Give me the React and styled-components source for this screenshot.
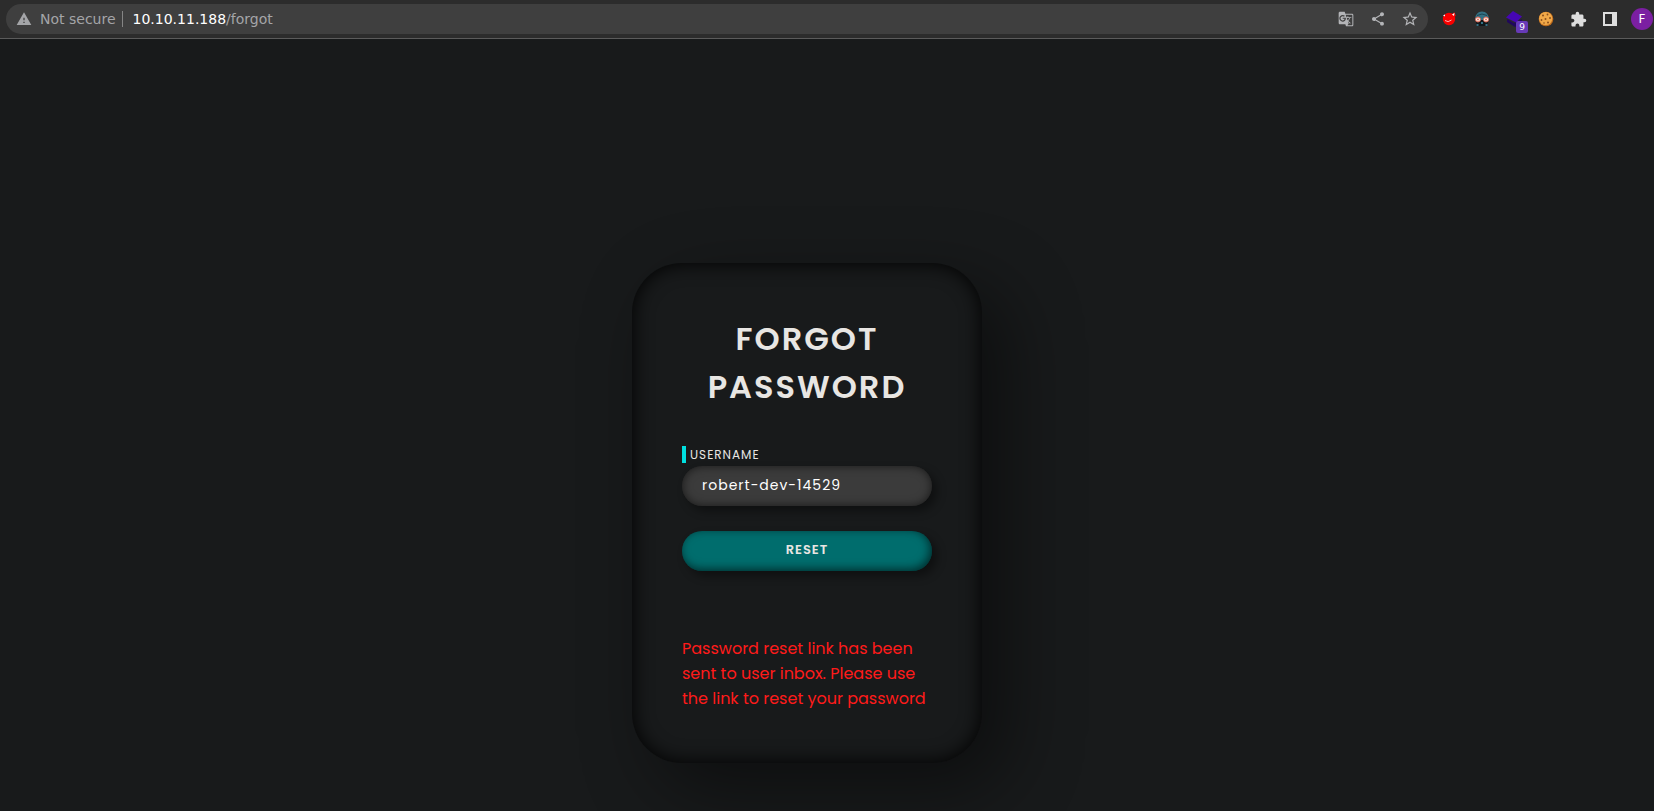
import React from "react";
import styled, { createGlobalStyle } from "styled-components";
import {
  MdWarning,
  MdGTranslate,
  MdShare,
  MdStarBorder,
  MdExtension,
} from "react-icons/md";

const GlobalStyle = createGlobalStyle`
  * { box-sizing: border-box; }
  html { background: #181a1b; }
  body { margin: 0; font-family: Poppins, Inter, sans-serif; }
  button, input { font: inherit; }
`;

const Page = styled.div`
  min-height: 100vh;
  display: flex;
  flex-direction: column;
  overflow: hidden;
`;

const Toolbar = styled.header`
  display: flex;
  align-items: center;
  gap: 6px;
  height: 39px;
  padding: 0 1px 0 6px;
  background: #2c2c2c;
  border-bottom: 1px solid #5b5b5b;
  font-family: "DejaVu Sans", sans-serif;
  font-size: 14px;
  color: #9aa0a6;
`;

const AddressBar = styled.div`
  flex: 1;
  display: flex;
  align-items: center;
  height: 30px;
  padding: 0 2px 0 10px;
  border-radius: 15px;
  background: #3f3f3f;
`;

const SiteInfo = styled.button`
  display: flex;
  align-items: center;
  gap: 8px;
  padding: 0;
  border: 0;
  background: none;
  color: #a4a5a8;
`;

const Divider = styled.span`
  width: 1px;
  height: 16px;
  margin: 0 10px 0 6px;
  background: #858585;
`;

const Url = styled.div`
  flex: 1;
  color: #a4a5a8;
`;

const Host = styled.span`
  color: #fff;
`;

const IconButton = styled.button`
  display: grid;
  place-items: center;
  position: relative;
  width: 32px;
  height: 30px;
  padding: 0;
  border: 0;
  background: none;
  color: ${(p) => (p.$bright ? "#dedede" : "#b4b5b8")};
`;

const Group = styled.div`
  display: flex;
  align-items: center;
`;

const Badge = styled.span`
  position: absolute;
  right: 2px;
  bottom: 1px;
  width: 12px;
  height: 12px;
  border-radius: 2px;
  background: #673ab7;
  color: #fff;
  font-size: 9px;
  line-height: 12px;
  text-align: center;
`;

const Avatar = styled.button`
  width: 22px;
  height: 22px;
  margin-left: 5px;
  padding: 0;
  border: 0;
  border-radius: 50%;
  background: #7b1fa2;
  color: #fff;
  font-size: 12px;
  line-height: 22px;
`;

const Main = styled.main`
  flex: 1;
  display: flex;
  justify-content: center;
  align-items: flex-start;
  padding: 224px 40px 48px 0;
`;

const Card = styled.section`
  display: flex;
  flex-direction: column;
  width: 350px;
  min-height: 500px;
  padding: 52px 50px;
  border-radius: 50px;
  background: #181a1b;
  box-shadow:
    inset 0 0 20px #000,
    25px 25px 75px rgba(0, 0, 0, 0.45);
`;

const Title = styled.h1`
  margin: 0;
  color: #e8e6e3;
  font-size: 32px;
  font-weight: 600;
  line-height: 48px;
  letter-spacing: 2px;
  text-align: center;
  text-transform: uppercase;
`;

const Form = styled.form`
  display: flex;
  flex-direction: column;
  margin-top: 35px;
`;

const Label = styled.label`
  align-self: flex-start;
  padding-left: 4px;
  border-left: 4px solid #00dfdf;
  color: #e8e6e3;
  font-size: 12px;
  line-height: 17px;
  letter-spacing: 1px;
  text-transform: uppercase;
`;

const Field = styled.input`
  height: 40px;
  margin-top: 3px;
  padding: 0 20px 2px;
  border: 0;
  border-radius: 20px;
  outline: 0;
  background: #3b3b3b;
  color: #fff;
  font-size: 14px;
  letter-spacing: 1px;
  box-shadow:
    inset 0 0 10px rgba(0, 0, 0, 0.6),
    5px 5px 10px rgba(0, 0, 0, 0.4);
`;

const Submit = styled.button`
  height: 40px;
  margin-top: 25px;
  padding: 0 0 2px;
  border: 0;
  border-radius: 20px;
  background: #006d6d;
  color: #e8e6e3;
  font-size: 13px;
  font-weight: 600;
  letter-spacing: 1px;
  text-transform: uppercase;
  box-shadow:
    inset -2px -2px 10px rgba(0, 0, 0, 0.6),
    5px 5px 10px rgba(0, 0, 0, 0.4);
`;

const Message = styled.p`
  margin: 65px 0 0;
  color: #ff1a1a;
  font-size: 16px;
  line-height: 25px;
`;

const CritterIcon = () => (
  <svg width="16" height="14" viewBox="0 0 16 14" aria-hidden="true">
    <circle cx="7" cy="7" r="6.200" fill="#f80000" />
    <path d="M10 2 12.500.3l1.300 3.700-2 1z" fill="#f80000" />
    <path d="M1 3.500 3 2.500v2zM10 2.500l2.500-1.500-.5 3z" fill="#fff" />
    <path d="M3 8.500q3 2.500 6.500-.5" fill="none" stroke="#ffb0b0" />
  </svg>
);

const GogglesIcon = () => (
  <svg width="16" height="16" viewBox="0 0 16 16" aria-hidden="true">
    <path d="M1 9C1 3.500 4 .5 8 .5S15 3.500 15 9z" fill="#347184" />
    <path d="M3 4.500 8 3l5 1.500" fill="none" stroke="#1b4554" />
    <path d="M2 9h12l-.5 6h-11z" fill="#10181c" />
    <path d="M2.500 13h2v2h-2zM11.500 13h2v2h-2zM7 11h2v2H7z" fill="#347184" />
    <circle cx="4" cy="8.500" r="2.500" fill="#fbeee9" stroke="#d9604c" />
    <circle cx="12" cy="8.500" r="2.500" fill="#fbeee9" stroke="#d9604c" />
    <circle cx="4" cy="8.500" r="1" fill="#e0705c" />
    <circle cx="12" cy="8.500" r="1" fill="#e0705c" />
  </svg>
);

const LayersIcon = () => (
  <svg width="18" height="18" viewBox="0 0 18 18" aria-hidden="true">
    <path d="m2 9 7 4 8-4v3l-7 5-8-5z" fill="#20085c" />
    <path d="m8 1 9 5.500-6 6-10-5z" fill="#4606b4" />
  </svg>
);

const CookieIcon = () => (
  <svg width="16" height="16" viewBox="0 0 16 16" aria-hidden="true">
    <circle cx="8" cy="8" r="7.300" fill="#bf6c1c" />
    <circle cx="7.700" cy="7.500" r="6.600" fill="#f0a848" />
    <g fill="#8a4f1d">
      <circle cx="5" cy="4.500" r="1" />
      <circle cx="9.500" cy="3.500" r=".9" />
      <circle cx="12" cy="7" r="1" />
      <circle cx="7.500" cy="8" r="1" />
      <circle cx="3.500" cy="9" r=".9" />
      <circle cx="10" cy="11.500" r="1" />
      <circle cx="6" cy="12" r=".8" />
    </g>
  </svg>
);

const PanelIcon = () => (
  <svg width="14" height="14" viewBox="0 0 14 14" aria-hidden="true">
    <path d="M0 0h14v14H0zM2 2v10h7V2z" fill="#dedede" fillRule="evenodd" />
  </svg>
);

export default function App() {
  return (
    <Page>
      <GlobalStyle />
      <Toolbar>
        <AddressBar>
          <SiteInfo type="button">
            <MdWarning size={16} />
            Not secure
          </SiteInfo>
          <Divider />
          <Url role="textbox" aria-label="Address">
            <Host>10.10.11.188</Host>/forgot
          </Url>
          <Group>
            <IconButton type="button" aria-label="Translate this page">
              <MdGTranslate size={16} />
            </IconButton>
            <IconButton type="button" aria-label="Share">
              <MdShare size={16} />
            </IconButton>
            <IconButton type="button" aria-label="Bookmark">
              <MdStarBorder size={18} />
            </IconButton>
          </Group>
        </AddressBar>
        <Group>
          <IconButton type="button" aria-label="Critter extension">
            <CritterIcon />
          </IconButton>
          <IconButton type="button" aria-label="Goggles extension">
            <GogglesIcon />
          </IconButton>
          <IconButton type="button" aria-label="Technology profiler">
            <LayersIcon />
            <Badge>9</Badge>
          </IconButton>
          <IconButton type="button" aria-label="Cookie editor">
            <CookieIcon />
          </IconButton>
          <IconButton type="button" aria-label="Extensions" $bright>
            <MdExtension size={17} />
          </IconButton>
          <IconButton type="button" aria-label="Side panel">
            <PanelIcon />
          </IconButton>
          <Avatar type="button">F</Avatar>
        </Group>
      </Toolbar>
      <Main>
        <Card>
          <Title>Forgot Password</Title>
          <Form onSubmit={(e) => e.preventDefault()}>
            <Label htmlFor="username">Username</Label>
            <Field id="username" type="text" defaultValue="robert-dev-14529" />
            <Submit type="submit">Reset</Submit>
          </Form>
          <Message role="status">
            Password reset link has been sent to user inbox. Please use the link
            to reset your password
          </Message>
        </Card>
      </Main>
    </Page>
  );
}
